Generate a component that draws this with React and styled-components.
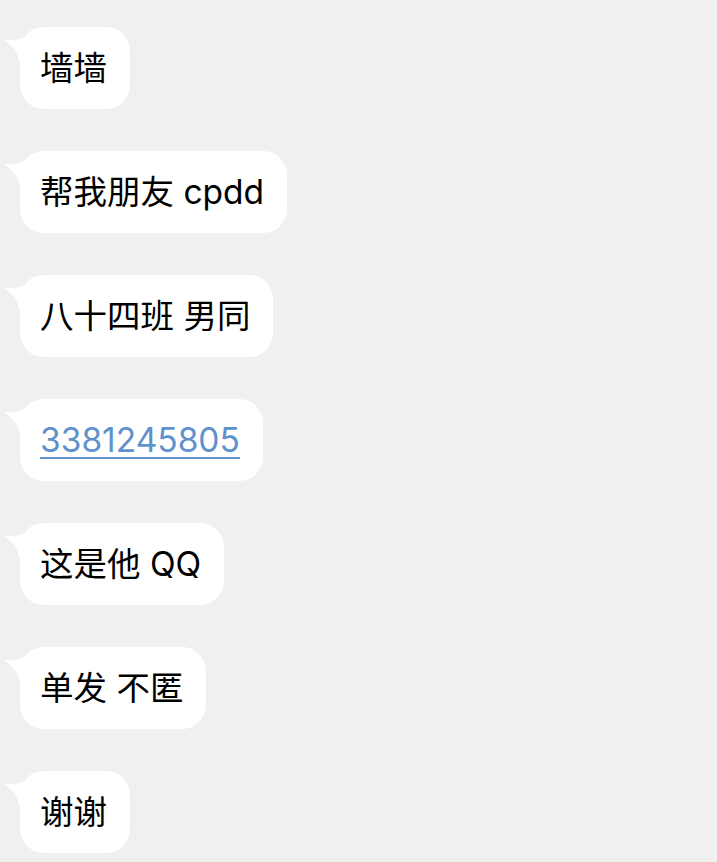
import React from 'react'
import styled, { createGlobalStyle } from 'styled-components'

const GlobalStyle = createGlobalStyle`
  html, body {
    margin: 0;
    padding: 0;
    background: #f0f0f0;
  }
`

const Thread = styled.main`
  display: flex;
  flex-direction: column;
  align-items: flex-start;
  gap: 42px;
  padding: 27px 0 0 20px;
  min-height: 862px;
  box-sizing: border-box;
  font-family: Inter, "Noto Sans CJK SC", sans-serif;
`

const Bubble = styled.div`
  position: relative;
  background: #ffffff;
  border-radius: 24px;
  padding: 20px 23px 20px 20px;
  font-size: 33.5px;
  line-height: 42px;
  color: #000;
  white-space: nowrap;
`

const Tail = styled.svg`
  position: absolute;
  left: -18px;
  top: 6px;
  width: 30px;
  height: 30px;
`

const Link = styled.a`
  color: #5f92cc;
  text-decoration: underline;
  text-decoration-thickness: 2px;
  text-underline-offset: 5px;
`

const messages = [
  { text: '墙墙' },
  { text: '帮我朋友 cpdd' },
  { text: '八十四班 男同' },
  { text: '3381245805', link: true },
  { text: '这是他 QQ' },
  { text: '单发 不匿' },
  { text: '谢谢' },
]

function Message({ text, link }) {
  return (
    <Bubble>
      <Tail viewBox="0 0 30 30">
        <path d="M2 7 Q 14 9 26 2 L 26 30 L 18 30 Q 15 15 2 7 Z" fill="#ffffff" />
      </Tail>
      {link ? <Link href="#">{text}</Link> : text}
    </Bubble>
  )
}

export default function App() {
  return (
    <>
      <GlobalStyle />
      <Thread>
        {messages.map((m, i) => (
          <Message key={i} {...m} />
        ))}
      </Thread>
    </>
  )
}
